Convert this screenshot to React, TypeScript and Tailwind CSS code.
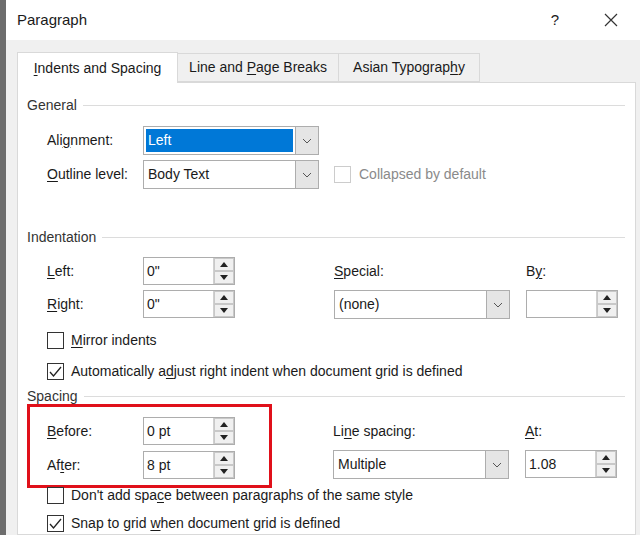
import React from 'react'

const font = { fontFamily: '"Liberation Sans", Arial, sans-serif' }

function U({ children }: { children: React.ReactNode }) {
  return <span className="underline underline-offset-2">{children}</span>
}

function Chevron() {
  return (
    <svg width="10" height="6" viewBox="0 0 10 6"><path d="M1 1l4 4 4-4" fill="none" stroke="#555" strokeWidth="1" /></svg>
  )
}

function Select({ value, w, highlight }: { value: string; w: string; highlight?: boolean }) {
  return (
    <div className={`flex h-[29px] ${w} border border-[#adadad] bg-white`}>
      <div className="flex flex-1 items-center p-[2px]">
        <div className={`flex h-full w-full items-center px-[2px] ${highlight ? 'bg-[#0078d7] text-white' : ''}`}>{value}</div>
      </div>
      <div className="flex w-[23px] items-center justify-center border-l border-[#adadad] bg-[#e5e5e5]"><Chevron /></div>
    </div>
  )
}

function Arrow({ up }: { up?: boolean }) {
  return (
    <svg width="8" height="5" viewBox="0 0 8 5"><path d={up ? 'M0 5L4 0L8 5Z' : 'M0 0L4 5L8 0Z'} fill="#222" /></svg>
  )
}

function Spin({ value, w = 'w-[92px]' }: { value: string; w?: string }) {
  return (
    <div className={`flex h-[28px] ${w} border border-[#adadad] bg-white`}>
      <div className="flex flex-1 items-center px-[3px]">{value}</div>
      <div className="flex w-[21px] flex-col border-l border-[#d0d0d0]">
        <div className="flex flex-1 items-center justify-center border border-[#c8c8c8] bg-[#f0f0f0]"><Arrow up /></div>
        <div className="flex flex-1 items-center justify-center border border-[#c8c8c8] bg-[#f0f0f0]"><Arrow /></div>
      </div>
    </div>
  )
}

function Check({ checked, disabled }: { checked?: boolean; disabled?: boolean }) {
  return (
    <div className={`flex h-[17px] w-[17px] items-center justify-center border ${disabled ? 'border-[#cccccc]' : 'border-[#333]'} bg-white`}>
      {checked ? (
        <svg width="13" height="11" viewBox="0 0 13 11"><path d="M1 6l3.5 4L12 1" fill="none" stroke="#222" strokeWidth="1.3" /></svg>
      ) : null}
    </div>
  )
}

function Section({ title }: { title: string }) {
  return (
    <div className="flex items-center gap-[6px] pl-[9px] pr-[10px]">
      <span className="text-[#333]">{title}</span>
      <div className="h-px flex-1 bg-[#dcdcdc]" />
    </div>
  )
}

export default function App() {
  return (
    <div className="flex h-[535px] w-[640px] overflow-hidden bg-[#f0f0f0] text-[14px] text-[#1a1a1a]" style={font}>
      <div className="w-[6px] bg-[#6d6d6d]" />
      <div className="flex flex-1 flex-col">
        <div className="flex h-[40px] shrink-0 items-center bg-white pl-[11px] pr-[22px]">
          <span className="flex-1 text-[15px]">Paragraph</span>
          <span className="mr-[45px] text-[15px]">?</span>
          <svg width="14" height="14" viewBox="0 0 14 14"><path d="M1 1l12 12M13 1L1 13" stroke="#333" strokeWidth="1.2" /></svg>
        </div>
        <div className="mt-[12px] flex h-[30px] shrink-0 items-end pl-[11px]">
          <div className="relative z-10 -mb-px flex h-[31px] w-[161px] items-center justify-center border border-b-0 border-[#d9d9d9] bg-white"><U>I</U>ndents and Spacing</div>
          <div className="flex h-[29px] w-[161px] items-center justify-center border border-l-0 border-[#d9d9d9] bg-[#f0f0f0]">Line and&nbsp;<U>P</U>age Breaks</div>
          <div className="flex h-[29px] w-[141px] items-center justify-center border border-l-0 border-[#d9d9d9] bg-[#f0f0f0]">Asian Typograp<U>h</U>y</div>
        </div>
        <div className="ml-[11px] mr-[4px] flex-1 border border-[#d9d9d9] bg-white pt-[12px]">
          <Section title="General" />
          <div className="mt-[10px] flex flex-col gap-[5px] pl-[29px]">
            <div className="flex items-center">
              <span className="w-[96px]">Ali<U>g</U>nment:</span>
              <Select value="Left" w="w-[176px]" highlight />
            </div>
            <div className="flex items-center">
              <span className="w-[96px]"><U>O</U>utline level:</span>
              <Select value="Body Text" w="w-[176px]" />
              <div className="ml-[15px] mr-[8px]"><Check disabled /></div>
              <span className="text-[#8a8a8a]">Collapsed by default</span>
            </div>
          </div>
          <div className="mt-[38px]"><Section title="Indentation" /></div>
          <div className="mt-[9px] flex pl-[29px]">
            <div className="flex flex-col gap-[5px]">
              <div className="flex items-center"><span className="w-[96px]"><U>L</U>eft:</span><Spin value={'0"'} /></div>
              <div className="flex items-center"><span className="w-[96px]"><U>R</U>ight:</span><Spin value={'0"'} /></div>
            </div>
            <div className="ml-[99px] flex flex-col">
              <span className="h-[28px] leading-[28px]"><U>S</U>pecial:</span>
              <div className="mt-[5px]"><Select value="(none)" w="w-[176px]" /></div>
            </div>
            <div className="ml-[16px] flex flex-col">
              <span className="h-[28px] leading-[28px]">B<U>y</U>:</span>
              <div className="mt-[5px]"><Spin value="" /></div>
            </div>
          </div>
          <div className="mt-[11px] flex flex-col gap-[10px] pl-[29px]">
            <div className="flex items-center gap-[7px]"><Check /><span><U>M</U>irror indents</span></div>
            <div className="flex items-center gap-[7px]"><Check checked /><span>Automatically a<U>d</U>just right indent when document grid is defined</span></div>
          </div>
          <div className="mt-[4px]"><Section title="Spacing" /></div>
          <div className="-mt-[3px] flex pl-[9px]">
            <div className="flex flex-col gap-[6px] border-[3px] border-[#e0101a] pt-[10px] pb-[6px] pl-[17px] pr-[34px]">
              <div className="flex items-center"><span className="w-[96px]"><U>B</U>efore:</span><Spin value="0 pt" /></div>
              <div className="flex items-center"><span className="w-[96px]">Af<U>t</U>er:</span><Spin value="8 pt" /></div>
            </div>
            <div className="ml-[61px] flex flex-col pt-[13px]">
              <span className="h-[28px] leading-[28px]">Li<U>n</U>e spacing:</span>
              <div className="mt-[5px]"><Select value="Multiple" w="w-[176px]" /></div>
            </div>
            <div className="ml-[16px] flex flex-col pt-[13px]">
              <span className="h-[28px] leading-[28px]"><U>A</U>t:</span>
              <div className="mt-[5px]"><Spin value="1.08" /></div>
            </div>
          </div>
          <div className="-mt-[3px] flex flex-col gap-[7px] pl-[29px]">
            <div className="flex items-center gap-[7px]"><Check /><span>Don't add spa<U>c</U>e between paragraphs of the same style</span></div>
            <div className="flex items-center gap-[7px]"><Check checked /><span>Snap to grid <U>w</U>hen document grid is defined</span></div>
          </div>
        </div>
      </div>
    </div>
  )
}
